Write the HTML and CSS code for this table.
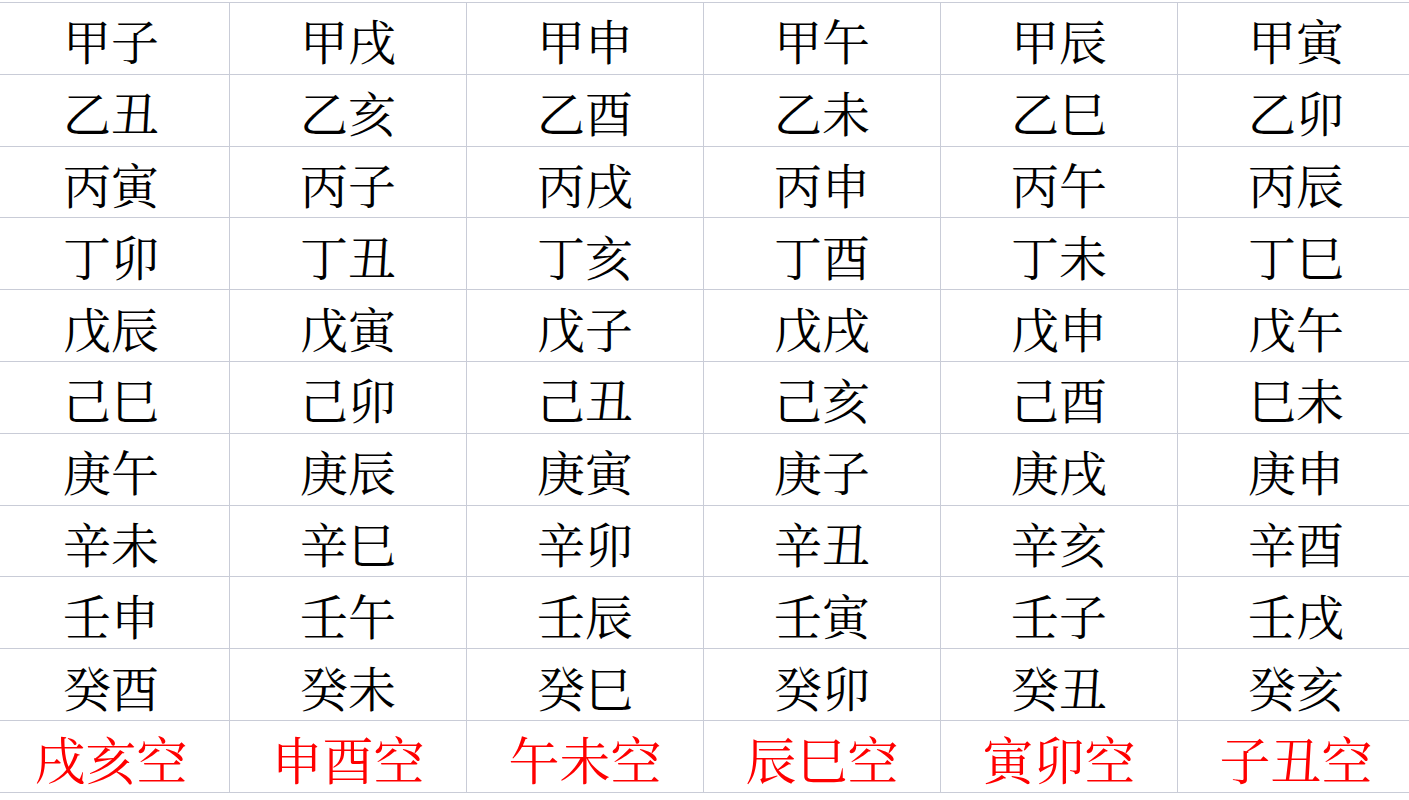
FILE: index.html
```html
<!DOCTYPE html>
<html lang="zh-CN">
<head>
<meta charset="utf-8">
<title>六十甲子旬空</title>
<link rel="stylesheet" href="styles.css">
</head>
<body>
<div class="sheet">
  <div class="cell">甲子</div><div class="cell">甲戌</div><div class="cell">甲申</div><div class="cell">甲午</div><div class="cell">甲辰</div><div class="cell">甲寅</div>
  <div class="cell">乙丑</div><div class="cell">乙亥</div><div class="cell">乙酉</div><div class="cell">乙未</div><div class="cell">乙巳</div><div class="cell">乙卯</div>
  <div class="cell">丙寅</div><div class="cell">丙子</div><div class="cell">丙戌</div><div class="cell">丙申</div><div class="cell">丙午</div><div class="cell">丙辰</div>
  <div class="cell">丁卯</div><div class="cell">丁丑</div><div class="cell">丁亥</div><div class="cell">丁酉</div><div class="cell">丁未</div><div class="cell">丁巳</div>
  <div class="cell">戊辰</div><div class="cell">戊寅</div><div class="cell">戊子</div><div class="cell">戊戌</div><div class="cell">戊申</div><div class="cell">戊午</div>
  <div class="cell">己巳</div><div class="cell">己卯</div><div class="cell">己丑</div><div class="cell">己亥</div><div class="cell">己酉</div><div class="cell">巳未</div>
  <div class="cell">庚午</div><div class="cell">庚辰</div><div class="cell">庚寅</div><div class="cell">庚子</div><div class="cell">庚戌</div><div class="cell">庚申</div>
  <div class="cell">辛未</div><div class="cell">辛巳</div><div class="cell">辛卯</div><div class="cell">辛丑</div><div class="cell">辛亥</div><div class="cell">辛酉</div>
  <div class="cell">壬申</div><div class="cell">壬午</div><div class="cell">壬辰</div><div class="cell">壬寅</div><div class="cell">壬子</div><div class="cell">壬戌</div>
  <div class="cell">癸酉</div><div class="cell">癸未</div><div class="cell">癸巳</div><div class="cell">癸卯</div><div class="cell">癸丑</div><div class="cell">癸亥</div>
  <div class="cell empty">戌亥空</div><div class="cell empty">申酉空</div><div class="cell empty">午未空</div><div class="cell empty">辰巳空</div><div class="cell empty">寅卯空</div><div class="cell empty">子丑空</div>
</div>
</body>
</html>
```
FILE: styles.css
```css
html, body {
  margin: 0;
  padding: 0;
  background: #ffffff;
  overflow: hidden;
}
body {
  font-family: "Noto Serif CJK SC", "Noto Sans CJK SC", serif;
}
.sheet {
  display: grid;
  grid-template-columns: repeat(6, 237px);
  grid-auto-rows: 71.8px;
  margin-left: -7px;
  margin-top: 2px;
  border-top: 1px solid #c9ccd7;
}
.cell {
  display: flex;
  align-items: center;
  justify-content: center;
  border-right: 1px solid #c9ccd7;
  border-bottom: 1px solid #c9ccd7;
  font-size: 48px;
  line-height: 1;
  color: #000000;
  padding-top: 4px;
  box-sizing: border-box;
}
.cell.empty {
  color: #ff0000;
  font-size: 51px;
}
```
